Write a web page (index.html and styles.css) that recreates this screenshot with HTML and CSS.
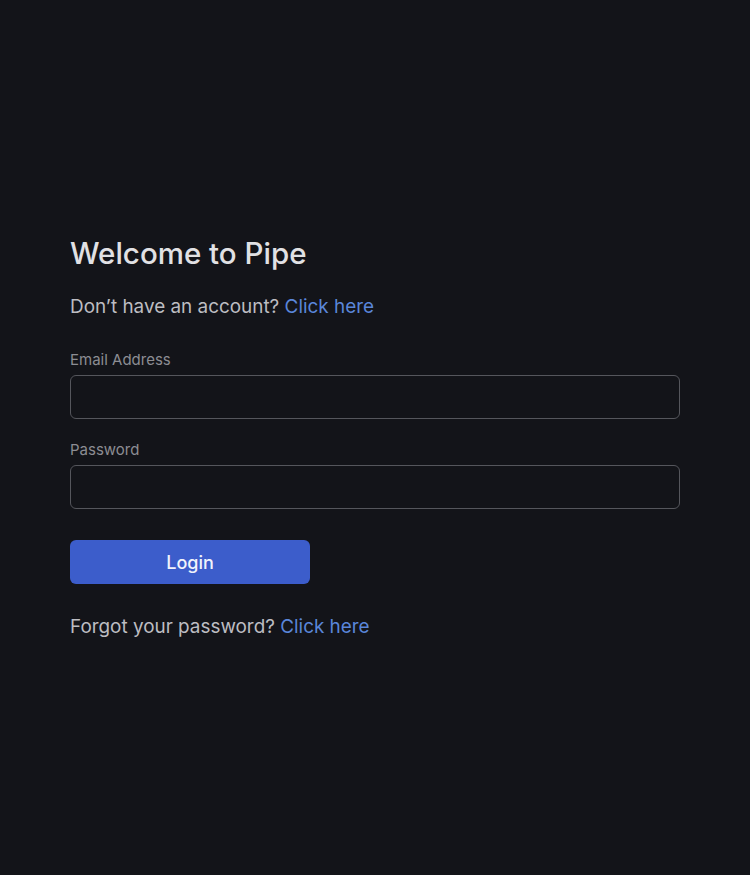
FILE: index.html
```html
<!DOCTYPE html>
<html lang="en">
<head>
<meta charset="utf-8">
<title>Welcome to Pipe</title>
<link rel="stylesheet" href="styles.css">
</head>
<body>
<main class="page">
  <form class="login">
    <h1 class="title">Welcome to Pipe</h1>
    <p class="prompt">Don’t have an account? <a class="link" href="#">Click here</a></p>
    <label class="field">
      <span class="label">Email Address</span>
      <input class="input" type="email">
    </label>
    <label class="field field-second">
      <span class="label">Password</span>
      <input class="input" type="password">
    </label>
    <button class="button" type="button">Login</button>
    <p class="prompt prompt-forgot">Forgot your password? <a class="link" href="#">Click here</a></p>
  </form>
</main>
</body>
</html>
```

FILE: styles.css
```css
html, body {
  margin: 0;
  padding: 0;
  background: #131419;
}
body {
  font-family: Inter, "Noto Sans", sans-serif;
  min-height: 875px;
}
.page {
  padding: 236px 70px 0 70px;
}
.login {
  display: flex;
  flex-direction: column;
  width: 610px;
}
.title {
  margin: 0;
  font-size: 29.5px;
  line-height: 34px;
  font-weight: 500;
  color: #e1e1e4;
}
.prompt {
  margin: 24px 0 0 0;
  font-size: 18.9px;
  line-height: 26px;
  color: #bdbdc2;
}
.link {
  color: #5a86d9;
  text-decoration: none;
}
.field {
  display: flex;
  flex-direction: column;
  gap: 5px;
  margin-top: 30px;
}
.field-second {
  margin-top: 21px;
}
.label {
  font-size: 15px;
  line-height: 20px;
  color: #8c8d93;
}
.input {
  box-sizing: border-box;
  height: 44px;
  width: 100%;
  margin: 0;
  background: #131419;
  border: 1.5px solid #55565c;
  border-radius: 6px;
  color: #e1e1e4;
  font: inherit;
}
.button {
  margin-top: 31px;
  width: 240px;
  height: 44px;
  border: none;
  border-radius: 6px;
  background: #3c5dcb;
  color: #f1f3fb;
  font-family: inherit;
  font-size: 18px;
  font-weight: 500;
}
.prompt-forgot {
  margin-top: 30px;
}
```
